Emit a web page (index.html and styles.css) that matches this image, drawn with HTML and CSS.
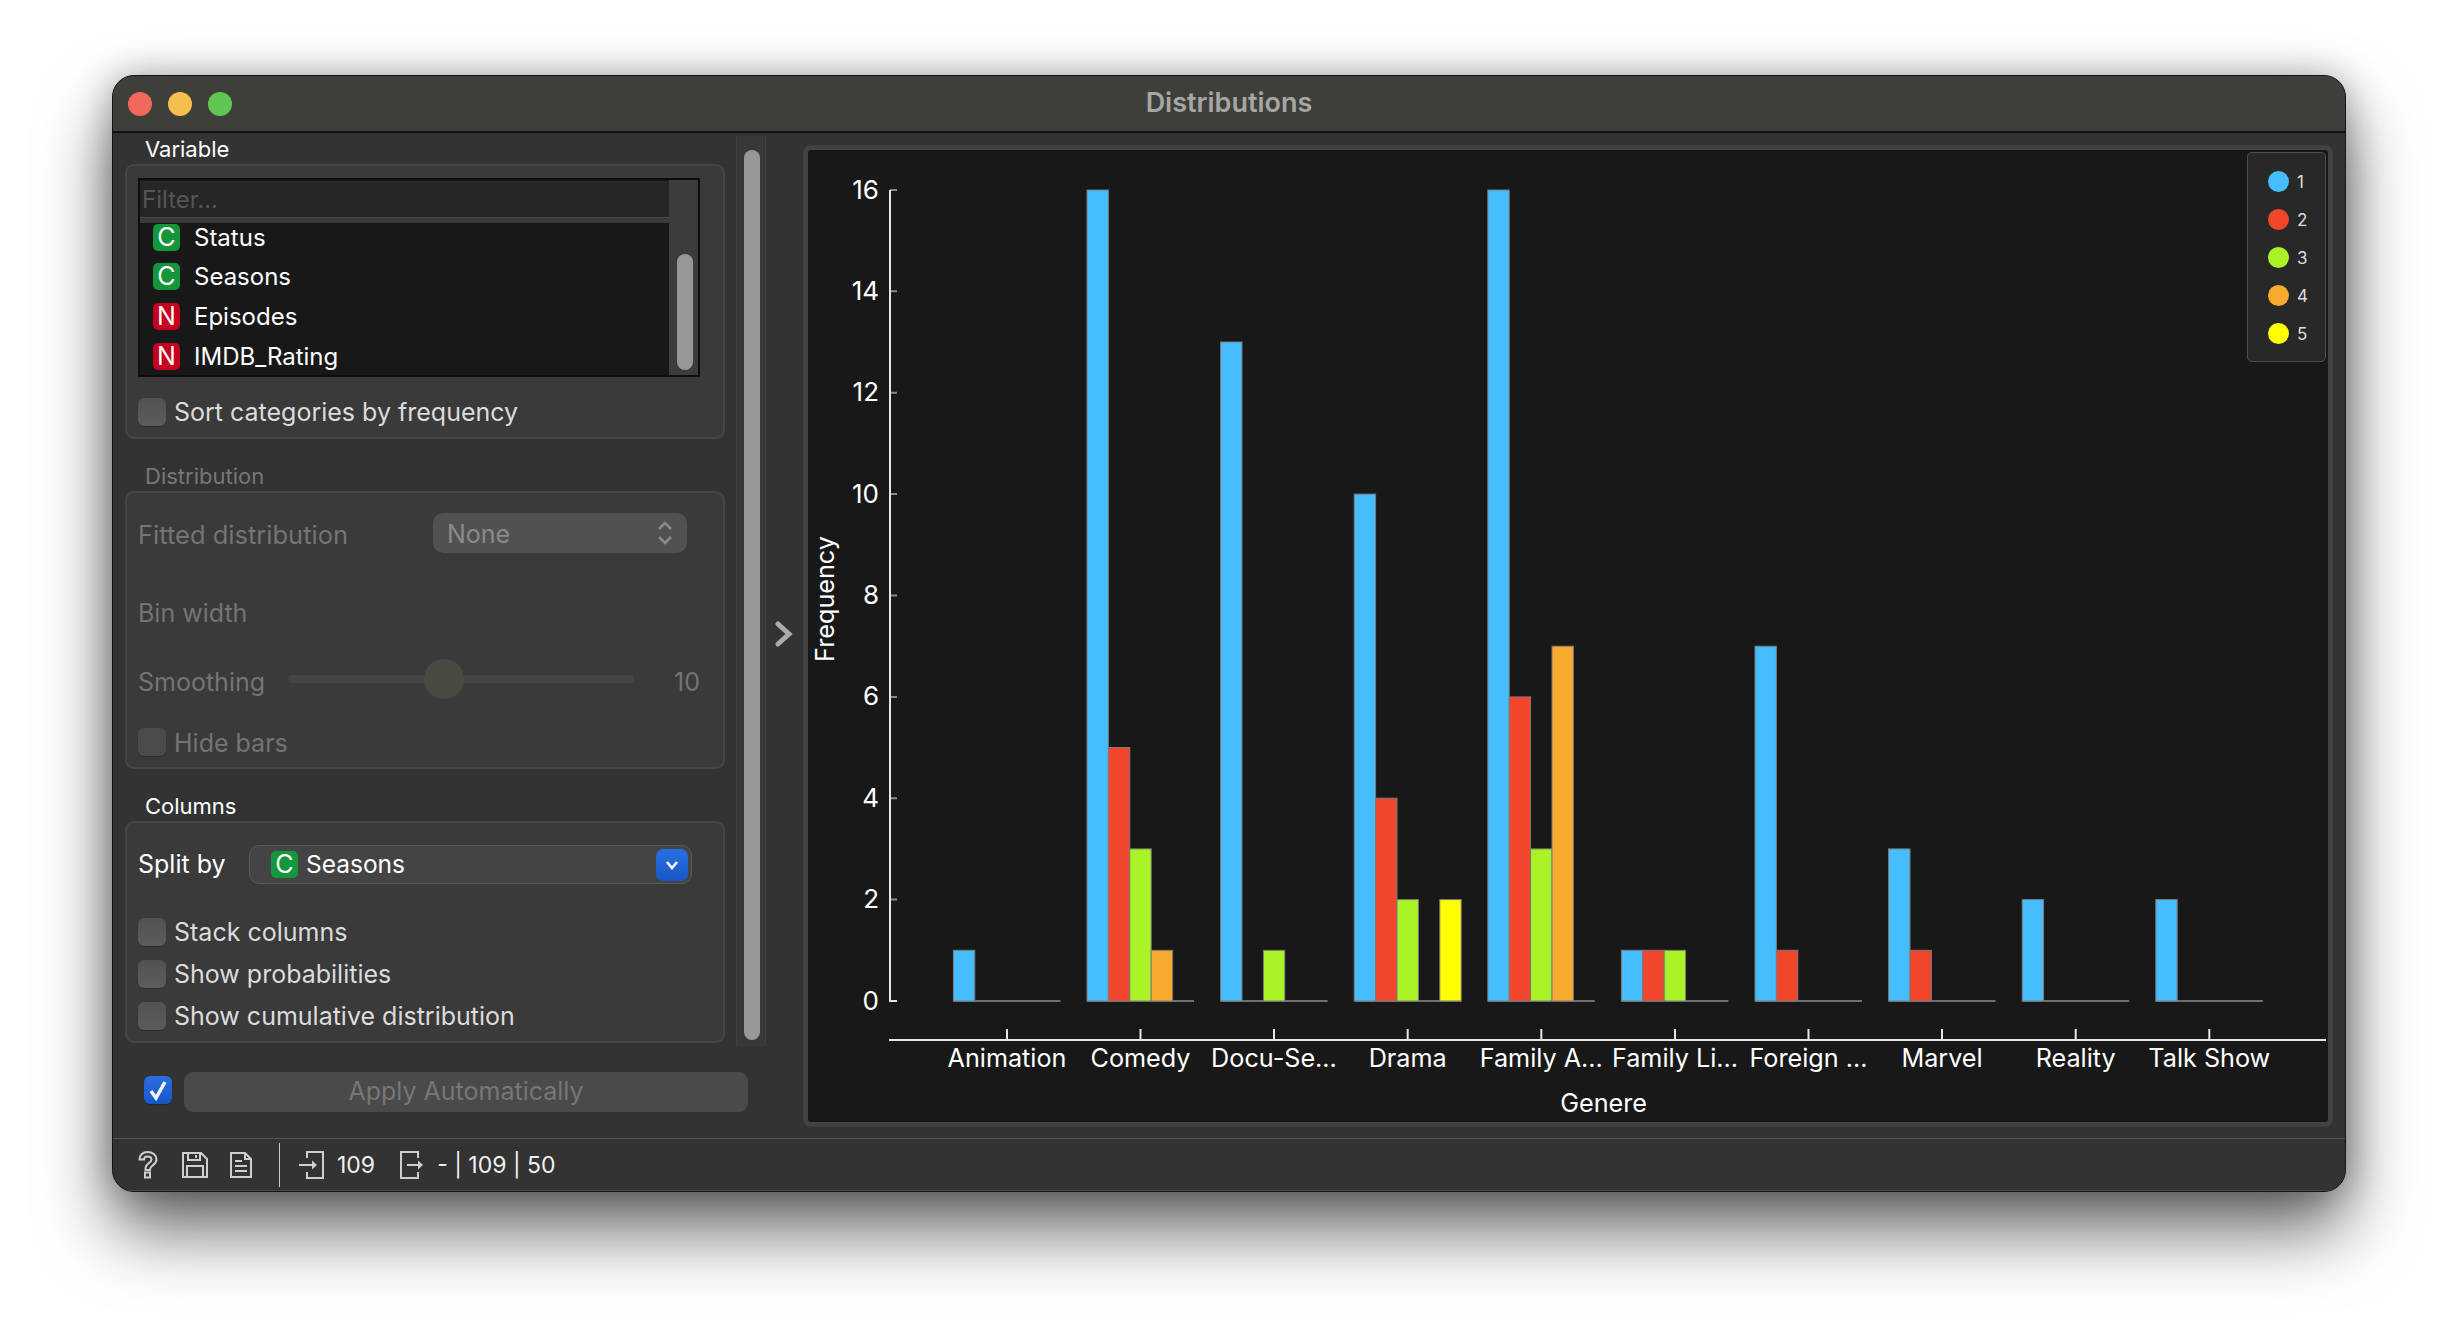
FILE: index.html
```html
<!DOCTYPE html>
<html lang="en">
<head>
<meta charset="utf-8">
<title>Distributions</title>
<link rel="stylesheet" href="styles.css">
</head>
<body>
<div class="window">
  <header class="titlebar">
    <div class="lights"><span class="light red"></span><span class="light yellow"></span><span class="light green"></span></div>
    <div class="title">Distributions</div>
  </header>
  <div class="main">
    <aside class="controls">
      <section class="section">
        <div class="legend-label">Variable</div>
        <div class="group group-variable">
          <div class="listbox">
            <div class="list-left">
              <div class="filter">Filter...</div>
              <div class="filter-gap"></div>
              <div class="rows">
                <div class="row"><span class="badge cat">C</span>Status</div>
                <div class="row"><span class="badge cat">C</span>Seasons</div>
                <div class="row"><span class="badge num">N</span>Episodes</div>
                <div class="row"><span class="badge num">N</span>IMDB_Rating</div>
              </div>
            </div>
            <div class="list-scroll"><div class="list-thumb"></div></div>
          </div>
          <label class="check check-sort"><span class="box"></span>Sort categories by frequency</label>
        </div>
      </section>
      <section class="section disabled">
        <div class="legend-label">Distribution</div>
        <div class="group group-dist">
          <div class="form-row">
            <span class="form-label wide">Fitted distribution</span>
            <div class="combo-off"><span class="combo-value">None</span>
              <svg class="updown" width="16" height="26" viewBox="0 0 16 26"><path d="M2 9 L8 3 L14 9 M2 17 L8 23 L14 17"/></svg>
            </div>
          </div>
          <div class="form-row bin"><span class="form-label">Bin width</span></div>
          <div class="form-row smooth">
            <span class="form-label narrow low">Smoothing</span>
            <div class="slider"><div class="track"></div><div class="knob"></div></div>
            <span class="slider-value low">10</span>
          </div>
          <label class="check check-hide"><span class="box"></span>Hide bars</label>
        </div>
      </section>
      <section class="section">
        <div class="legend-label">Columns</div>
        <div class="group group-cols">
          <div class="form-row split">
            <span class="split-label">Split by</span>
            <div class="combo-on">
              <span class="badge cat">C</span><span class="combo-text">Seasons</span>
              <span class="combo-btn"><svg width="14" height="12" viewBox="0 0 14 12"><path d="M2 3 L7 9 L12 3"/></svg></span>
            </div>
          </div>
          <div class="check-list">
            <label class="check"><span class="box"></span>Stack columns</label>
            <label class="check"><span class="box"></span>Show probabilities</label>
            <label class="check"><span class="box"></span>Show cumulative distribution</label>
          </div>
        </div>
      </section>
      <div class="apply-row">
        <span class="box checked"><svg width="20" height="22" viewBox="0 0 20 22"><path d="M3 12 L8 19 L17 3"/></svg></span>
        <button class="apply" type="button">Apply Automatically</button>
      </div>
    </aside>
    <div class="split-scroll"><div class="split-thumb"></div></div>
    <div class="collapse">
      <svg width="18" height="26" viewBox="0 0 18 26"><path d="M3 3 L14 13 L3 23"/></svg>
    </div>
    <div class="plot-panel">
      <svg class="chart" width="1520" height="970" viewBox="808 150 1520 970">
        <g class="yticks">
          <path d="M890 190H897M890 291.3H897M890 392.7H897M890 494.1H897M890 595.5H897M890 696.9H897M890 798.2H897M890 899.6H897"/>
        </g>
        <path class="axis" d="M897 1001H890V190"/>
        <g class="ylabels">
          <text x="879" y="1000">0</text><text x="879" y="898.6">2</text><text x="879" y="797.2">4</text><text x="879" y="695.9">6</text><text x="879" y="594.5">8</text><text x="879" y="493.1">10</text><text x="879" y="391.7">12</text><text x="879" y="290.3">14</text><text x="879" y="189">16</text>
        </g>
        <text class="axis-title" transform="translate(825 599) rotate(-90)">Frequency</text>
        <g transform="translate(953.4 1001)"><path class="base" d="M0 0H107"/><rect class="s1" width="21.4" height="50.7" y="-50.7"/></g>
        <g transform="translate(1087 1001)"><path class="base" d="M0 0H107"/><rect class="s1" width="21.4" height="811" y="-811"/><rect class="s2" x="21.4" width="21.4" height="253.5" y="-253.5"/><rect class="s3" x="42.8" width="21.4" height="152.1" y="-152.1"/><rect class="s4" x="64.2" width="21.4" height="50.7" y="-50.7"/></g>
        <g transform="translate(1220.6 1001)"><path class="base" d="M0 0H107"/><rect class="s1" width="21.4" height="659" y="-659"/><rect class="s3" x="42.8" width="21.4" height="50.7" y="-50.7"/></g>
        <g transform="translate(1354.2 1001)"><path class="base" d="M0 0H107"/><rect class="s1" width="21.4" height="506.9" y="-506.9"/><rect class="s2" x="21.4" width="21.4" height="202.8" y="-202.8"/><rect class="s3" x="42.8" width="21.4" height="101.4" y="-101.4"/><rect class="s5" x="85.6" width="21.4" height="101.4" y="-101.4"/></g>
        <g transform="translate(1487.8 1001)"><path class="base" d="M0 0H107"/><rect class="s1" width="21.4" height="811" y="-811"/><rect class="s2" x="21.4" width="21.4" height="304.1" y="-304.1"/><rect class="s3" x="42.8" width="21.4" height="152.1" y="-152.1"/><rect class="s4" x="64.2" width="21.4" height="354.8" y="-354.8"/></g>
        <g transform="translate(1621.4 1001)"><path class="base" d="M0 0H107"/><rect class="s1" width="21.4" height="50.7" y="-50.7"/><rect class="s2" x="21.4" width="21.4" height="50.7" y="-50.7"/><rect class="s3" x="42.8" width="21.4" height="50.7" y="-50.7"/></g>
        <g transform="translate(1755 1001)"><path class="base" d="M0 0H107"/><rect class="s1" width="21.4" height="354.8" y="-354.8"/><rect class="s2" x="21.4" width="21.4" height="50.7" y="-50.7"/></g>
        <g transform="translate(1888.6 1001)"><path class="base" d="M0 0H107"/><rect class="s1" width="21.4" height="152.1" y="-152.1"/><rect class="s2" x="21.4" width="21.4" height="50.7" y="-50.7"/></g>
        <g transform="translate(2022.2 1001)"><path class="base" d="M0 0H107"/><rect class="s1" width="21.4" height="101.4" y="-101.4"/></g>
        <g transform="translate(2155.8 1001)"><path class="base" d="M0 0H107"/><rect class="s1" width="21.4" height="101.4" y="-101.4"/></g>
        <path class="axis" d="M889 1040H2326M1007 1029V1040M1140.5 1029V1040M1274 1029V1040M1407.7 1029V1040M1541.3 1029V1040M1675 1029V1040M1808.5 1029V1040M1942 1029V1040M2075.7 1029V1040M2209.3 1029V1040"/>
        <g class="xlabels">
          <text x="1007" y="1058">Animation</text><text x="1140.5" y="1058">Comedy</text><text x="1274" y="1058">Docu-Se...</text><text x="1407.7" y="1058">Drama</text><text x="1541.3" y="1058">Family A...</text><text x="1675" y="1058">Family Li...</text><text x="1808.5" y="1058">Foreign ...</text><text x="1942" y="1058">Marvel</text><text x="2075.7" y="1058">Reality</text><text x="2209.3" y="1058">Talk Show</text>
        </g>
        <text class="xlabels" x="1603.6" y="1103">Genere</text>
      </svg>
      <div class="legend">
        <div class="legend-item"><span class="dot d1"></span>1</div>
        <div class="legend-item"><span class="dot d2"></span>2</div>
        <div class="legend-item"><span class="dot d3"></span>3</div>
        <div class="legend-item"><span class="dot d4"></span>4</div>
        <div class="legend-item"><span class="dot d5"></span>5</div>
      </div>
    </div>
  </div>
  <footer class="statusbar">
    <svg class="ico ico-help" width="20" height="28" viewBox="0 0 20 28"><path d="M1.500 8.500 C1.500 4 5 1 9.500 1 C14.500 1 18.500 4 18.500 8.500 C18.500 12 16 13.500 14 15 C12.500 16 12 17 12 19 H7.500 V17.500 C7.500 14.500 9.500 13 11.500 11.500 C13 10.500 13.500 9.500 13.500 8.500 C13.500 6.500 12 5.500 9.500 5.500 C7.500 5.500 6 6.500 6 8.500 Z M7 21.500 H12 V26.500 H7 Z"/></svg>
    <svg class="ico ico-save" width="26" height="26" viewBox="0 0 26 26"><path d="M1 1 H19 L25 7 V25 H1 Z M6 1 V8 H18 V1 M14 3 V6 M5 25 V14 H21 V25"/></svg>
    <svg class="ico ico-doc" width="22" height="26" viewBox="0 0 22 26"><path d="M1 1 H15 L21 7 V25 H1 Z M15 1 V7 H21 M5 9 H12 M5 14 H17 M5 19 H17"/></svg>
    <span class="status-sep"></span>
    <svg class="ico ico-in" width="25" height="28" viewBox="0 0 25 28"><path d="M8 7 V1 H24 V27 H8 V21 M0 14 H14"/><path class="ico-head" d="M13 9.500 L18 14 L13 18.500 Z"/></svg>
    <span class="status-text in-count">109</span>
    <svg class="ico ico-out" width="24" height="28" viewBox="0 0 24 28"><path d="M18 7 V1 H1 V27 H18 V21 M7 14 H19"/><path class="ico-head" d="M18 9.500 L23 14 L18 18.500 Z"/></svg>
    <span class="status-text">- | 109 | 50</span>
  </footer>
</div>
</body>
</html>
```
FILE: styles.css
```css
* { box-sizing: border-box; }
html, body { margin: 0; height: 100%; }
body {
  background: #fff;
  padding: 75px 0 0 112px;
  overflow: hidden;
  font-family: Inter, "Liberation Sans", sans-serif;
  font-size: 25px;
  color: #fff;
}
.window {
  width: 2234px;
  height: 1117px;
  display: flex;
  flex-direction: column;
  background: #333;
  border: 1px solid #151515;
  border-radius: 22px;
  overflow: hidden;
  box-shadow: 0 38px 70px rgba(0, 0, 0, .6), 0 0 36px rgba(0, 0, 0, .28);
}
.titlebar {
  flex: none;
  height: 57px;
  display: flex;
  align-items: center;
  position: relative;
  background: #3f3f3a;
  border-bottom: 2px solid #111;
}
.lights { display: flex; gap: 16px; padding-left: 15px; }
.light { width: 24px; height: 24px; border-radius: 50%; }
.red { background: #f0695c; }
.yellow { background: #f5bf4f; }
.green { background: #61c554; }
.title {
  position: absolute;
  left: 0; right: 0;
  padding-bottom: 2px;
  text-align: center;
  font-size: 27px;
  font-weight: 600;
  color: #a6a6a6;
}
.main { flex: 1; display: flex; min-height: 0; }
.controls {
  flex: none;
  width: 623px;
  padding: 3px 0 0 12px;
  display: flex;
  flex-direction: column;
  gap: 24px;
}
.legend-label {
  height: 26px;
  line-height: 26px;
  margin: 0 0 2px 20px;
  font-size: 22px;
}
.group {
  width: 600px;
  background: #3a3a3a;
  border: 2px solid #464646;
  border-radius: 9px;
}
.group-variable { height: 275px; padding: 12px 23px 11px 11px; }
.group-dist { height: 278px; padding: 20px 11px 11px; }
.group-cols { height: 222px; padding: 22px 11px 11px; }
.disabled .legend-label { color: #777; }
.disabled { color: #747474; }

.listbox {
  height: 199px;
  display: flex;
  border: 2px solid #0d0d0d;
  background: #181818;
}
.list-left { flex: 1; min-width: 0; display: flex; flex-direction: column; }
.filter {
  height: 37px;
  margin-top: 1px;
  padding-left: 2px;
  line-height: 38px;
  font-size: 24px;
  background: #262626;
  border-bottom: 1px solid #4a4a4a;
  color: #555;
}
.filter-gap { height: 5px; background: #3a3a3a; }
.rows {
  flex: 1;
  min-height: 0;
  display: flex;
  flex-direction: column;
}
.row {
  flex: none;
  height: 40px;
  line-height: 27px;
  font-size: 24px;
  display: flex;
  align-items: center;
  padding: 0 0 0 13px;
  gap: 14px;
}
.row:first-child { height: 33px; padding: 0 0 5px 13px; }
.badge {
  flex: none;
  width: 27px;
  height: 27px;
  border-radius: 5px;
  display: flex;
  align-items: center;
  justify-content: center;
  font-size: 25px;
  line-height: 27px;
}
.cat { background: #13963c; }
.num { background: #c6001f; }
.list-scroll { flex: none; width: 29px; background: #3c3c3c; padding: 74px 0 0 8px; }
.list-thumb { width: 16px; height: 116px; border-radius: 8px; background: #979797; }

.check { display: flex; align-items: center; gap: 8px; height: 28px; color: #dcdcdc; }
.check-sort { margin-top: 21px; }
.box {
  flex: none;
  width: 28px;
  height: 28px;
  border-radius: 6px;
  background: linear-gradient(#525252, #5c5c5c);
  box-shadow: 0 1px 1px rgba(0, 0, 0, .25);
}
.disabled .check { color: #747474; padding-top: 1px; }
.disabled .box { background: #4b4b4b; margin-top: -1px; }
.check-hide { margin-top: 29px; }
.check-list { display: flex; flex-direction: column; gap: 14px; margin-top: 34px; }

.form-row { display: flex; align-items: center; height: 40px; }
.form-label { flex: none; }
.wide { width: 295px; padding-top: 2px; font-size: 25.5px; }
.narrow { width: 150px; }
.low { padding-top: 6px; }
.combo-off {
  width: 254px;
  height: 40px;
  padding: 0 14px;
  display: flex;
  align-items: center;
  justify-content: space-between;
  border-radius: 10px;
  background: #515151;
  color: #8a8a8a;
}
.combo-value { padding-top: 2px; }
.updown { fill: none; stroke: #8a8a8a; stroke-width: 2.5; }
.bin { margin-top: 40px; }
.smooth { margin-top: 26px; }
.slider { position: relative; flex: none; width: 346px; height: 40px; display: flex; align-items: center; }
.track { width: 100%; height: 8px; border-radius: 4px; background: #444; }
.knob {
  position: absolute;
  left: 136px; top: 0;
  width: 40px; height: 40px;
  border-radius: 50%;
  background: #4a4a43;
}
.slider-value { margin-left: 40px; }

.split { height: 39px; }
.split-label { width: 111px; flex: none; padding-bottom: 2px; }
.combo-on {
  width: 443px;
  height: 39px;
  display: flex;
  align-items: center;
  padding: 0 3px 0 21px;
  background: #444;
  border: 1px solid #5a5a5a;
  border-radius: 10px;
}
.combo-text { margin-left: 8px; flex: 1; font-size: 24.5px; padding-bottom: 2px; }
.combo-btn {
  flex: none;
  width: 32px;
  height: 32px;
  display: flex;
  align-items: center;
  justify-content: center;
  border-radius: 7px;
  background: linear-gradient(#2a6fe0, #1657c6);
}
.combo-btn svg { fill: none; stroke: #fff; stroke-width: 2.5; }
.apply-row { display: flex; gap: 12px; width: 635px; padding-left: 19px; margin-top: 5px; }
.box.checked {
  margin-top: 4px;
  display: flex;
  align-items: center;
  justify-content: center;
  background: linear-gradient(#2a6fe0, #1657c6);
}
.checked svg { fill: none; stroke: #f2f5ff; stroke-width: 3.5; }
.apply {
  flex: none;
  width: 564px;
  height: 40px;
  border: 0;
  border-radius: 9px;
  background: #4a4a4a;
  color: #777;
  font: inherit;
  padding: 0 0 2px;
}

.split-scroll {
  flex: none;
  width: 30px;
  height: 910px;
  margin-top: 3px;
  padding: 14px 0 0 8px;
  background: #383838;
  border: solid #414141;
  border-width: 0 1px;
}
.split-thumb { width: 16px; height: 890px; border-radius: 8px; background: #979797; margin-left: -1px; }
.collapse { flex: none; width: 37px; display: flex; align-items: center; padding: 0 0 3px 9px; }
.collapse svg { fill: none; stroke: #aaa; stroke-width: 5; stroke-linecap: round; }

.plot-panel {
  position: relative;
  flex: none;
  width: 1530px;
  height: 982px;
  margin-top: 12px;
  border: 5px solid #424242;
  border-radius: 8px;
  background: #181818;
  overflow: hidden;
}
.chart { display: block; font-size: 25.2px; }
.chart text { fill: #fff; }
.ylabels text { text-anchor: end; dominant-baseline: central; font-size: 26px; }
.xlabels text, text.xlabels { text-anchor: middle; dominant-baseline: central; }
.axis-title { text-anchor: middle; dominant-baseline: central; }
.axis { fill: none; stroke: #e6e6e6; stroke-width: 2; }
.yticks path { stroke: #8a8a8a; stroke-width: 2; fill: none; }
.base { stroke: #707070; stroke-width: 2; fill: none; }
.chart rect { stroke: #7b7b7b; stroke-width: 1; }
.s1 { fill: #46bdfc; }
.s2 { fill: #f0472c; }
.s3 { fill: #a9f326; }
.s4 { fill: #f6ab2f; }
.s5 { fill: #ffff00; }

.legend {
  position: absolute;
  top: 2px; right: 2px;
  width: 79px;
  height: 210px;
  padding: 18px 0 0 20px;
  display: flex;
  flex-direction: column;
  gap: 17px;
  background: #282828;
  border: 1px solid #4e4e4e;
  border-radius: 5px;
  font-size: 17px;
  color: #dedede;
}
.legend-item { display: flex; align-items: center; gap: 8px; height: 21px; }
.dot { width: 21px; height: 21px; border-radius: 50%; }
.d1 { background: #46bdfc; }
.d2 { background: #f0472c; }
.d3 { background: #a9f326; }
.d4 { background: #f6ab2f; }
.d5 { background: #ffff00; }

.statusbar {
  flex: none;
  height: 53px;
  display: flex;
  align-items: center;
  padding-left: 25px;
  border-top: 1px solid #555;
  border-bottom: 1px solid #484848;
  background: #333;
}
.ico { flex: none; fill: none; stroke: #cfcfcf; stroke-width: 2; }
.ico-head { fill: #cfcfcf; stroke: none; }
.ico-save { margin-left: 24px; }
.ico-doc { margin-left: 22px; }
.status-sep { width: 1px; height: 44px; margin: 0 19px 0 27px; background: #ccc; }
.status-text { margin-left: 13px; font-size: 23px; color: #f0f0f0; }
.in-count { margin-right: 25px; }
```
